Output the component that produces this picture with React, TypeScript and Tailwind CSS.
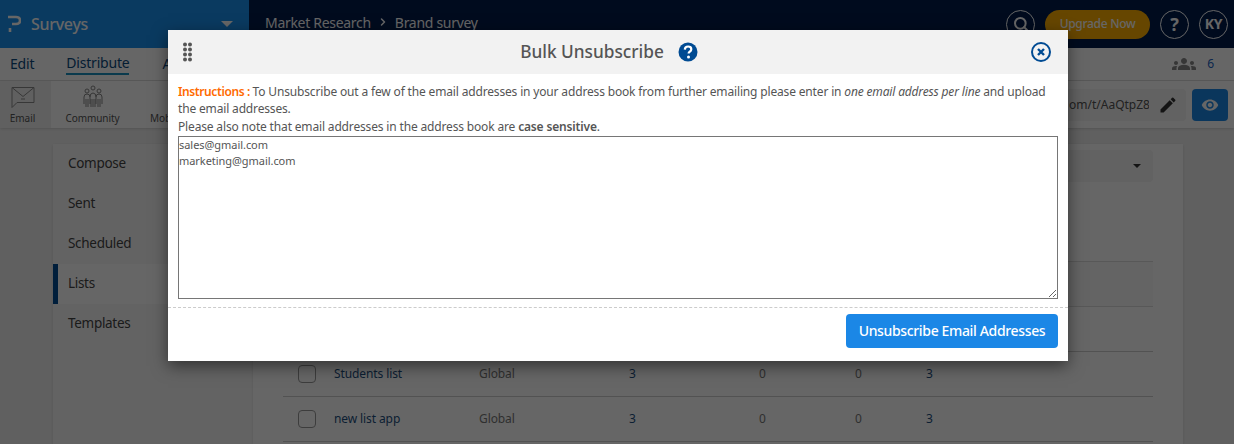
import { ChevronRight, Search } from "lucide-react";
import { MdEdit, MdGroups, MdVisibility } from "react-icons/md";

const rows = [
  { name: "Students list", type: "Global", a: 3, b: 0, c: 0, d: 3 },
  { name: "new list app", type: "Global", a: 3, b: 0, c: 0, d: 3 },
];

const sideItems = ["Compose", "Sent", "Scheduled", "Lists", "Templates"];

const font = "font-['Noto_Sans','Open_Sans',sans-serif]";

const EmailIcon = () => (
  <svg width="24" height="23" viewBox="0 0 24 23" fill="none" stroke="#8a8a8a" strokeWidth="1">
    <path d="M1 1.5h22v15H6l-5 5z" />
    <path d="M1 1.5l11 9 11-9" />
    <path d="M10 13h4" />
  </svg>
);

const CommunityIcon = () => (
  <svg width="22" height="24" viewBox="0 0 22 24" fill="none" stroke="#888" strokeWidth="1">
    <circle cx="11" cy="3" r="2" />
    <circle cx="5" cy="6" r="2" />
    <circle cx="17" cy="6" r="2" />
    <path d="M2 19v-7q0-3 3-3t3 3v7M14 19v-7q0-3 3-3t3 3v7M8 12q0-4 3-4t3 4M4 14v8M6 14v8M9 14v8M11 14v8M13 14v8M16 14v8M18 14v8" />
  </svg>
);

const DragDots = () => (
  <svg width="9" height="20" viewBox="0 0 9 20" fill="#555">
    {[2.5, 7.5, 12.5, 17.5].flatMap((y) =>
      [2, 7].map((x) => <circle key={`${x}-${y}`} cx={x} cy={y} r="2" />),
    )}
  </svg>
);

const HelpIcon = () => (
  <svg width="20" height="20" viewBox="0 0 20 20">
    <circle cx="10" cy="10" r="9.5" fill="#004b93" />
    <path d="M6.8 7.6q.2-3.1 3.3-3.1 3.2 0 3.2 2.7 0 1.6-1.6 2.5-1.1.7-1.1 1.9" fill="none" stroke="#fff" strokeWidth="2.2" />
    <circle cx="10.5" cy="15" r="1.5" fill="#fff" />
  </svg>
);

const CloseIcon = () => (
  <svg width="20" height="20" viewBox="0 0 20 20" fill="none" stroke="#004b93">
    <circle cx="10" cy="10" r="9" strokeWidth="2" />
    <path d="M7 7l6 6M13 7l-6 6" strokeWidth="2.4" />
  </svg>
);

const LogoMark = () => (
  <svg width="13" height="18" viewBox="0 0 13 18" fill="none" stroke="#fff" strokeWidth="2.6">
    <path d="M0 2h8q4 0 4 3.5T8 9H4" />
    <path d="M2 13v4" />
  </svg>
);

export default function App() {
  return (
    <div className={`relative h-[444px] w-[1234px] overflow-hidden bg-[#f0f0f0] ${font}`}>
      <header className="flex h-12 bg-[#001c4c]">
        <div className="flex w-[249px] items-center bg-[#1b91f0] pl-2 pr-4">
          <LogoMark />
          <span className="ml-[10px] text-[16px] font-medium tracking-[-0.3px] text-white">Surveys</span>
          <span className="ml-auto h-0 w-0 border-x-[6px] border-t-[6px] border-x-transparent border-t-white" />
        </div>
        <div className="flex flex-1 items-center pl-4 text-[14px] tracking-[-0.3px] text-white">
          <span className="pb-1">Market Research</span>
          <ChevronRight className="mx-[6px] mb-1 h-3 w-3" strokeWidth={3} />
          <span className="pb-1">Brand survey</span>
          <div className="ml-auto flex items-center gap-[10px] pr-[6px]">
            <span className="flex h-[29px] w-[29px] items-center justify-center rounded-full border border-white">
              <Search className="h-4 w-4" strokeWidth={3} />
            </span>
            <span className="flex h-[29px] w-[105px] items-center justify-center rounded-full bg-[#ffb000] text-[12px] font-medium">
              Upgrade Now
            </span>
            <span className="flex h-[29px] w-[29px] items-center justify-center rounded-full border border-white text-lg font-bold">?</span>
            <span className="flex h-[29px] w-[29px] items-center justify-center rounded-full border border-white text-sm font-bold">KY</span>
          </div>
        </div>
      </header>

      <nav className="flex h-[33px] items-center border-b border-[#ddd] bg-white pl-[10px] pr-5 text-sm tracking-[-0.2px] text-[#0a4a80]">
        <span>Edit</span>
        <span className="ml-8 border-b-2 border-[#1b91c0]">Distribute</span>
        <span className="ml-[33px]">Analyze</span>
        <MdGroups className="ml-auto text-[#888]" size={24} />
        <span className="ml-[11px] text-xs text-[#2060c0]">6</span>
      </nav>

      <div className="flex h-[47px] items-start bg-white shadow-sm">
        <div className="flex h-full w-[51px] flex-col items-center bg-[#f0f0f0] pr-[6px] pt-[5px] text-[10px] leading-3 text-[#555]">
          <EmailIcon />
          <span className="mt-[3px]">Email</span>
        </div>
        <div className="flex w-[83px] flex-col items-center pt-[4px] text-[10px] leading-3 tracking-[-0.1px] text-[#555]">
          <CommunityIcon />
          <span className="mt-[3px]">Community</span>
        </div>
        <div className="ml-4 pt-[31px] text-[10px] leading-3 text-[#555]">Mobile</div>
        <div className="ml-auto flex items-center pr-[6px] pt-2">
          <div className="w-[89px] overflow-hidden whitespace-nowrap rounded-l bg-[#f4f4f4] pl-[9px] text-[12px] leading-8 text-[#555]">om/t/AaQtpZ8T</div>
          <span className="flex h-8 w-[37px] items-center justify-center rounded-r bg-[#f4f4f4]">
            <MdEdit className="text-[#333]" size={20} />
          </span>
          <span className="ml-[6px] flex h-8 w-9 items-center justify-center rounded bg-[#1b87e6]">
            <MdVisibility className="text-white" size={18} />
          </span>
        </div>
      </div>

      <main className="ml-[53px] mt-4 flex h-[300px] w-[1130px]">
        <aside className="w-[200px] bg-[#f8f8f8] shadow-sm">
          {sideItems.map((item) => (
            <div
              key={item}
              className={`flex h-10 items-center pb-0.5 text-[13.5px] tracking-[-0.3px] text-[#444] ${
                item === "Lists" ? "border-l-[5px] border-[#004b93] bg-white pl-[10px]" : "pl-[15px]"
              }`}
            >
              {item}
            </div>
          ))}
        </aside>
        <section className="flex-1 bg-white pl-[30px] pr-[30px] pt-[6px] shadow-sm">
          <div className="flex h-8 items-center justify-end rounded bg-[#f4f4f4] pr-3">
            <span className="h-0 w-0 border-x-4 border-t-4 border-x-transparent border-t-[#333]" />
          </div>
          <div className="mt-[79px] h-[46px] border-y border-[#ddd] bg-[#fafafa]" />
          <div className="h-[45px] border-b border-[#ccc]" />
          {rows.map((row) => (
            <div key={row.name} className="flex h-[45px] items-center border-b border-[#ccc] text-xs tracking-[-0.1px]">
              <span className="ml-[15px] h-[18px] w-[18px] rounded-sm border border-[#999]" />
              <span className="ml-[18px] w-[145px] text-[#1d4f80]">{row.name}</span>
              <span className="w-[150px] text-[#777]">{row.type}</span>
              <span className="w-[130px] text-[#1d4f80]">{row.a}</span>
              <span className="w-[96px] text-[#777]">{row.b}</span>
              <span className="w-[71px] text-[#777]">{row.c}</span>
              <span className="text-[#1d4f80]">{row.d}</span>
            </div>
          ))}
        </section>
      </main>

      <div className="absolute inset-0 flex justify-center bg-black/60 pl-[2px] pt-[30px]">
        <div className="h-[331px] w-[900px] bg-white shadow-[0_5px_15px_rgba(0,0,0,0.5)]">
          <div className="flex h-[44px] items-center bg-[#f2f2f2] pl-[15px] pr-[17px]">
            <DragDots />
            <div className="flex flex-1 items-center justify-center pr-[5px] text-[17.25px] font-medium text-[#555]">
              <span className="pb-px">Bulk Unsubscribe</span>
              <span className="ml-[14px] flex"><HelpIcon /></span>
            </div>
            <CloseIcon />
          </div>
          <div className="px-[10px] pt-[9px] text-[12px] leading-[17px] tracking-[-0.16px] text-[#555]">
            <p>
              <b className="font-semibold tracking-[-0.4px] text-[#ff6a00]">Instructions : </b>
              To Unsubscribe out a few of the email addresses in your address book from further emailing please enter in{" "}
              <i>one email address per line</i> and upload the email addresses.
            </p>
            <p className="mt-px">
              Please also note that email addresses in the address book are <b className="font-semibold">case sensitive</b>.
            </p>
            <textarea
              readOnly
              className="mt-px block h-[163px] w-full border border-[#767676] text-[11px] leading-4 tracking-[-0.05px] text-[#555] outline-none"
              defaultValue={"sales@gmail.com\nmarketing@gmail.com"}
            />
          </div>
          <div className="mt-2 flex justify-end border-t border-dashed border-[#ccc] pr-[10px] pt-[6px]">
            <button className="h-[34px] w-[212px] rounded bg-[#1b87e6] text-sm font-medium tracking-[-0.35px] text-white">
              Unsubscribe Email Addresses
            </button>
          </div>
        </div>
      </div>
    </div>
  );
}
